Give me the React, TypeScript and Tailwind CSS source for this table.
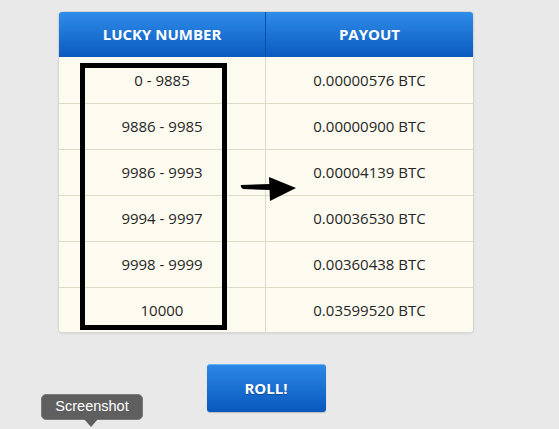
const rows = [
  ["0 - 9885", "0.00000576 BTC"],
  ["9886 - 9985", "0.00000900 BTC"],
  ["9986 - 9993", "0.00004139 BTC"],
  ["9994 - 9997", "0.00036530 BTC"],
  ["9998 - 9999", "0.00360438 BTC"],
  ["10000", "0.03599520 BTC"],
];

const App = () => {
  return (
    <div
      className="relative w-[559px] h-[429px] overflow-hidden bg-[#e9e9e9] pt-[11px]"
      style={{ fontFamily: '"Open Sans", "Liberation Sans", sans-serif' }}
    >
      <div className="relative ml-[58px] w-[416px]">
        <div className="rounded-[4px] border border-[#d6d6d2] shadow-[0_1px_2px_rgba(0,0,0,0.08)] overflow-hidden">
          <div className="grid grid-cols-[207px_1fr] h-[45px] bg-gradient-to-b from-[#2f8ce9] to-[#0a5ac0] text-white font-bold text-[15px]">
            <div className="flex items-center justify-center border-r border-[#0b4f9f]">LUCKY NUMBER</div>
            <div className="flex items-center justify-center">PAYOUT</div>
          </div>
          {rows.map(([range, payout], i) => (
            <div
              key={range}
              className={`grid grid-cols-[207px_1fr] bg-[#fdfbef] text-[15px] text-[#262626] ${
                i > 0 ? "border-t border-[#dedac8]" : ""
              } ${i === rows.length - 1 ? "h-[45px]" : "h-[46px]"}`}
            >
              <div className="flex items-center justify-center border-r border-[#dedac8]">{range}</div>
              <div className="flex items-center justify-center">{payout}</div>
            </div>
          ))}
        </div>

        {/* hand drawn highlight box + arrow */}
        <div className="absolute left-[22px] top-[52px] w-[147px] h-[267px] border-[5px] border-black" />
        <svg className="absolute left-[182px] top-[164px]" width="58" height="28" viewBox="0 0 58 28">
          <path d="M1 10 L30 9 L30 15 L3 14 Q0 12 1 10 Z" fill="#000" />
          <path d="M29 2 L56 13 L30 26 Z" fill="#000" />
        </svg>
      </div>

      <div className="ml-[58px] w-[416px] flex justify-center mt-[31px]">
        <button className="w-[119px] h-[48px] rounded-[3px] bg-gradient-to-b from-[#2c88e6] to-[#0857bd] border-t border-[#6bb0f2] shadow-[0_1px_1px_rgba(0,0,0,0.2)] text-white font-bold text-[15px] [text-shadow:0_1px_1px_rgba(0,0,0,0.3)]">
          ROLL!
        </button>
      </div>

      {/* tooltip */}
      <div className="absolute left-[41px] top-[394px]">
        <div
          className="h-[26px] w-[102px] rounded-[5px] bg-[#5f5f5f] border border-[#7a7a7a] flex items-center justify-center text-white text-[14.5px]"
          style={{ fontFamily: '"Liberation Sans", Arial, sans-serif' }}
        >
          Screenshot
        </div>
        <div className="absolute left-[43px] top-[25px] w-0 h-0 border-l-[7px] border-r-[7px] border-t-[8px] border-l-transparent border-r-transparent border-t-[#5f5f5f]" />
      </div>
    </div>
  );
};

export default App;
